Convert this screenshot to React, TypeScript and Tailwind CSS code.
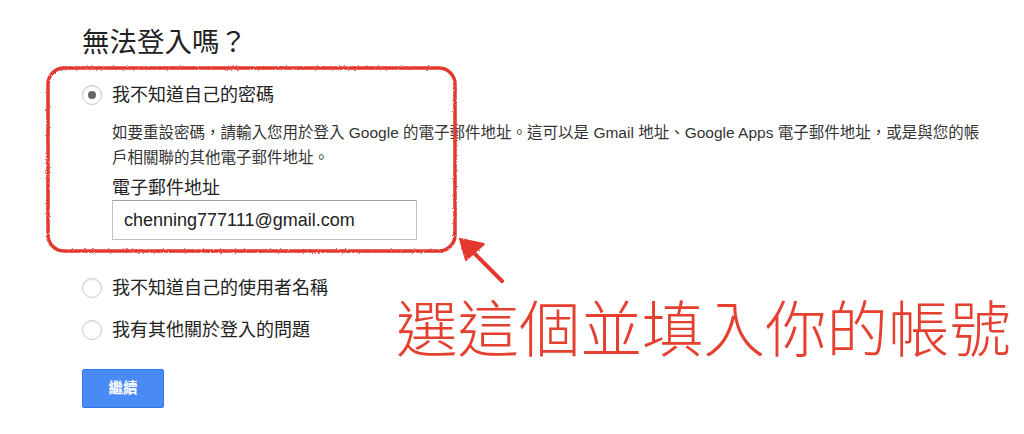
import React from "react";

const radioBase =
  "flex h-[20px] w-[20px] shrink-0 items-center justify-center rounded-full border border-[#c8c8c8] bg-white shadow-[inset_0_1px_1px_rgba(0,0,0,0.08)]";

function Radio({ checked, label }: { checked?: boolean; label: string }) {
  return (
    <label className="flex h-[20px] items-center gap-[10px] text-[18px] leading-[20px] text-[#222]">
      <span className={radioBase}>
        {checked && <span className="h-[8px] w-[8px] rounded-full bg-[#666]" />}
      </span>
      <span>{label}</span>
    </label>
  );
}

// red marker annotation drawn on top of the form
function Annotation() {
  return (
    <svg
      className="pointer-events-none absolute left-0 top-0"
      width="1024"
      height="434"
      viewBox="0 0 1024 434"
      fill="none"
    >
      <defs>
        <filter id="marker" x="-5%" y="-5%" width="110%" height="110%">
          <feTurbulence type="fractalNoise" baseFrequency="0.6" numOctaves="2" seed="3" />
          <feDisplacementMap in="SourceGraphic" scale="2.5" />
        </filter>
      </defs>
      <g filter="url(#marker)">
        <rect
          x="48"
          y="68"
          width="407"
          height="183"
          rx="16"
          stroke="#e3392e"
          strokeWidth="3.5"
        />
        <path d="M502 281 L468 247" stroke="#e3392e" strokeWidth="4" strokeLinecap="round" />
        <path d="M460 239 L484 244 L466 260 Z" fill="#e3392e" stroke="#e3392e" strokeWidth="2" strokeLinejoin="round" />
      </g>
    </svg>
  );
}

export default function App() {
  return (
    <div className="relative h-[434px] w-[1024px] overflow-hidden bg-white font-['Liberation_Sans','Noto_Sans_CJK_TC',sans-serif]">
      <div className="flex flex-col pl-[82px] pt-[26px]">
        <h1 className="text-[27.5px] leading-[34px] text-[#222]">無法登入嗎？</h1>

        <div className="mt-[25px]">
          <Radio checked label="我不知道自己的密碼" />
        </div>

        <div className="flex flex-col pl-[30px]">
          <p className="mt-[15px] text-[15.5px] leading-[25px] text-[#333]">
            如要重設密碼，請輸入您用於登入 Google 的電子郵件地址。這可以是 Gmail 地址、Google Apps 電子郵件地址，或是與您的帳
            <br />
            戶相關聯的其他電子郵件地址。
          </p>
          <div className="mt-[7px] text-[18px] leading-[22px] text-[#222]">電子郵件地址</div>
          <div className="mt-[1px] flex h-[40px] w-[305px] items-center border border-[#c0c0c0] border-t-[#a0a0a0] bg-white px-[11px] text-[18px] text-[#222]">
            chenning777111@gmail.com
          </div>
        </div>

        <div className="mt-[38px]">
          <Radio label="我不知道自己的使用者名稱" />
        </div>
        <div className="mt-[22px]">
          <Radio label="我有其他關於登入的問題" />
        </div>

        <div className="mt-[29px]">
          <button className="flex h-[39px] w-[82px] items-center justify-center rounded-[2px] border border-[#3079ed] bg-[#4a8af4] text-[14.5px] font-bold text-white">
            繼續
          </button>
        </div>
      </div>

      <Annotation />

      <div className="absolute left-[396px] top-[290px] font-['Noto_Sans_CJK_TC',sans-serif] text-[61.5px] font-light leading-[72px] text-[#e5402f]">
        選這個並填入你的帳號
      </div>
    </div>
  );
}
